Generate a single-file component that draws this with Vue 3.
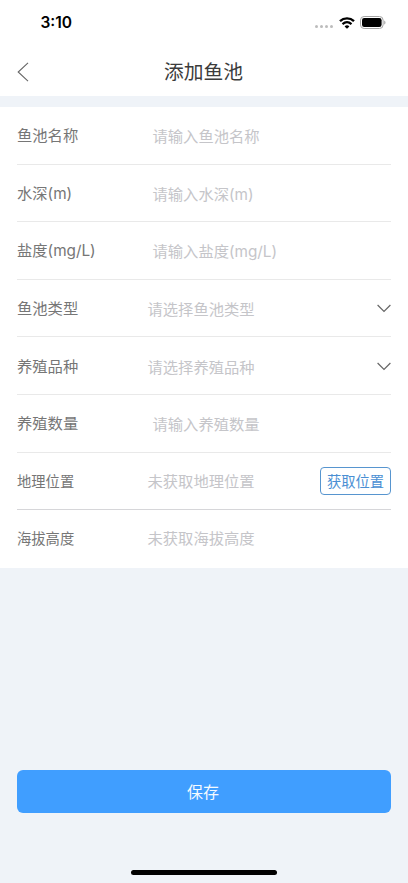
<script setup>
const rows = [
  { label: '鱼池名称', hint: '请输入鱼池名称', kind: 'input' },
  { label: '水深(m)', hint: '请输入水深(m)', kind: 'input' },
  { label: '盐度(mg/L)', hint: '请输入盐度(mg/L)', kind: 'input' },
  { label: '鱼池类型', hint: '请选择鱼池类型', kind: 'select' },
  { label: '养殖品种', hint: '请选择养殖品种', kind: 'select' },
  { label: '养殖数量', hint: '请输入养殖数量', kind: 'input' },
  { label: '地理位置', hint: '未获取地理位置', kind: 'info', action: '获取位置' },
  { label: '海拔高度', hint: '未获取海拔高度', kind: 'info' },
]
</script>

<template>
  <div class="page">
    <div class="status">
      <span class="time">3:10</span>
      <div class="indicators">
        <span class="dots"><i v-for="n in 4" :key="n" /></span>
        <svg class="wifi" width="16" height="12" viewBox="0 0 16 12" fill="none" stroke="#000">
          <path d="M1 4.1C5 .4 11 .4 15 4.1" stroke-width="2.4" />
          <path d="M3.5 7.1C6.2 4.7 9.8 4.7 12.5 7.1" stroke-width="2.2" />
          <path d="M8 11.8 5.6 9.4C7 8 9 8 10.4 9.4Z" fill="#000" stroke="none" />
        </svg>
        <svg class="battery" width="26" height="13" viewBox="0 0 26 13">
          <rect x=".5" y=".5" width="22.6" height="12" rx="3.6" fill="#fff" stroke="#a4a4a4" />
          <rect x="2" y="2" width="19.6" height="9" rx="2.2" fill="#000" />
          <path d="M24.3 4.4c1.5.6 1.5 3.6 0 4.2Z" fill="#999" />
        </svg>
      </div>
    </div>
    <header class="nav">
      <svg class="back" width="12" height="20" viewBox="0 0 12 20" fill="none" stroke="#666" stroke-width="1.1">
        <path d="M11 .9 1.2 10 11 19.1" />
      </svg>
      <h1>添加鱼池</h1>
    </header>
    <main class="form">
      <div v-for="row in rows" :key="row.label" class="row" :class="row.kind">
        <span class="label">{{ row.label }}</span>
        <span class="hint">{{ row.hint }}</span>
        <svg v-if="row.kind === 'select'" class="arrow" width="14" height="9" viewBox="0 0 14 9" fill="none" stroke="#666" stroke-width="1.2">
          <path d="M.6 1 7 7.4 13.4 1" />
        </svg>
        <button v-if="row.action" class="locate">{{ row.action }}</button>
      </div>
    </main>
    <button class="save">保存</button>
    <div class="home" />
  </div>
</template>

<style>
body {
  background: #eff3f8;
}
</style>

<style scoped>
.page {
  display: flex;
  flex-direction: column;
  box-sizing: border-box;
  height: 883px;
  background: #eff3f8;
  font-family: Inter, 'Noto Sans CJK SC', sans-serif;
}
.status {
  display: flex;
  justify-content: space-between;
  align-items: center;
  height: 46px;
  padding: 0 22px 0 40.5px;
  background: #fff;
}
.time {
  font-size: 15.5px;
  font-weight: 600;
  line-height: 20px;
}
.indicators {
  display: flex;
  align-items: center;
  margin-top: -1px;
}
.dots {
  display: flex;
  gap: 1.6px;
  margin: 8px 6px 0 0;
}
.dots i {
  width: 3.4px;
  height: 3.4px;
  border-radius: 50%;
  background: #bcbcbc;
}
.wifi {
  margin-right: 5px;
}
.nav {
  display: grid;
  grid-template-columns: 40px 1fr 40px;
  align-items: center;
  height: 50px;
  padding-top: 2px;
  box-sizing: border-box;
  background: #fff;
}
.back {
  margin-left: 17px;
}
h1 {
  margin: 0;
  padding-right: 1px;
  text-align: center;
  font-size: 19.8px;
  font-weight: 400;
  line-height: 28px;
  color: #3c3c3c;
}
.form {
  flex: none;
  margin-top: 11px;
  padding: 0 17px;
  background: #fff;
}
.row {
  display: flex;
  align-items: center;
  height: 57.6px;
  box-sizing: border-box;
  border-bottom: 1px solid #e9e9e9;
  font-size: 15.3px;
  line-height: 22px;
}
.row:nth-child(7) {
  border-color: #d6d6d9;
}
.row:last-child {
  border-color: transparent;
}
.label {
  width: 130.5px;
  padding-top: 2px;
  color: #767676;
}
.info .label {
  font-size: 14.3px;
}
.hint {
  flex: 1;
  padding-top: 2px;
  color: #c5c5c9;
}
.input .hint {
  padding: 4px 0 0 5px;
}
.select .hint {
  padding-top: 4px;
}
.arrow {
  margin-top: 1px;
}
.locate {
  width: 71px;
  height: 28px;
  padding: 1px 0 0;
  border: 1.3px solid #5795cf;
  border-radius: 4px;
  background: #fff;
  color: #4a8fd3;
  font: inherit;
  font-size: 14.3px;
  line-height: 26px;
}
.save {
  flex: none;
  height: 43px;
  margin: 202.2px 17px 0;
  padding: 0 2px 0 0;
  border: 0;
  border-radius: 6px;
  background: #409eff;
  color: #f4faff;
  font: inherit;
  font-size: 16px;
}
.home {
  flex: none;
  align-self: center;
  width: 146px;
  height: 5px;
  margin-top: 56.8px;
  border-radius: 3px;
  background: #000;
}
</style>
